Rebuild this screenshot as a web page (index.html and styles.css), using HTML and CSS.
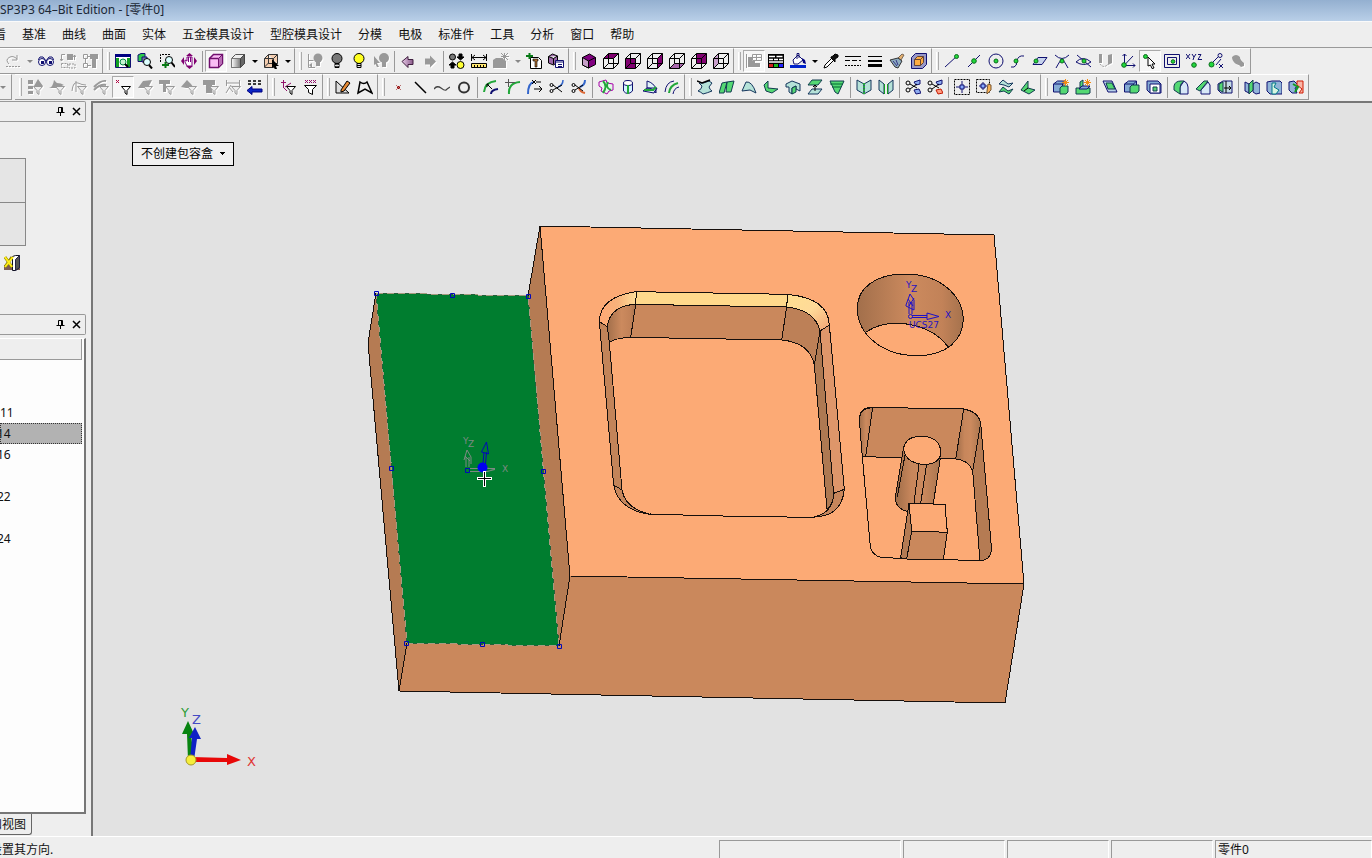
FILE: index.html
```html
<!DOCTYPE html>
<html lang="zh-CN">
<head>
<meta charset="utf-8">
<title>SP3P3 64–Bit Edition - [零件0]</title>
<link rel="stylesheet" href="styles.css">
</head>
<body>
<svg class="sprite" aria-hidden="true">
  <defs>
    <linearGradient id="metal"><stop offset="0" stop-color="#fff"/><stop offset="1" stop-color="#777"/></linearGradient>
    <linearGradient id="mauve"><stop offset="0" stop-color="#e8cbe8"/><stop offset="1" stop-color="#8a5a8a"/></linearGradient>
  </defs>
  <!-- view and edit -->
  <symbol id="redo" viewBox="0 0 16 16"><path class="sg" d="M4 11Q0 7 4 4.500Q8 2 12 6M12 2v5H7"/><path class="sg dash" d="M1 13.500h14"/></symbol>
  <symbol id="glasses" viewBox="0 0 16 16"><g class="sn"><circle cx="4" cy="9" r="3.500" fill="#fff"/><circle cx="12" cy="9" r="3.500" fill="#fff"/><path d="M0 7l2-3h3l3 4 3-4h3l2 3"/><path class="fn" d="M3 8h3v3H3zM11 8h3v3h-3z"/></g></symbol>
  <symbol id="swap" viewBox="0 0 16 16"><path class="sg" d="M5 1.500H1.500v6M0 6l1.500 2L3 6M14.500 2v5M13 4l1.500-2L16 4"/><path class="fg" d="M7 1h6v6H7z"/><path class="sg dash" d="M1.500 10.500h6v4h-6zM9 11h6v4H9z"/></symbol>
  <symbol id="tree" viewBox="0 0 16 16"><path class="sg" d="M1.500 1.500h4v4h-4zM1.500 10.500h4v4h-4zM3.500 6v4M6 3.500h3M6 12.500h3"/><path class="fg" d="M8 1h8v5h-2v9h-4V6H8z"/></symbol>
  <symbol id="fit" viewBox="0 0 16 16"><path fill="#fff" class="sn" d="M.5 1.500h15v13H.5z"/><path fill="#000080" stroke="none" d="M0 1h16v3H0z"/><path fill="#119f22" stroke="none" d="M1 5h3v9H1zM12 5h3v9h-3z"/><circle cx="8" cy="9" r="3" fill="#c5f5d0" stroke="#084"/><path stroke-width="2" d="M10 11l3 3"/></symbol>
  <symbol id="zoomall" viewBox="0 0 16 16"><path class="grn sn" d="M1 2l3-1.500h4v6l-3 2H1z"/><path fill="#77a" class="sn" d="M5 4h5v5H5z"/><circle cx="10" cy="9" r="3.500" fill="#dff" /><path stroke-width="2" d="M12 12l3 3.500"/></symbol>
  <symbol id="zoomwin" viewBox="0 0 16 16"><path class="dash" d="M1.500 9V1.500H11"/><circle cx="10" cy="7" r="3.500" fill="#dff"/><path stroke-width="2" d="M12.500 9.500L16 14"/><path stroke="#087a16" stroke-width="2" d="M3 12h7M6.500 9v6"/></symbol>
  <symbol id="pan" viewBox="0 0 16 16"><path fill="#fff" stroke="#800080" d="M4 7l2 1V4h5v9H6L4 9z"/><path stroke="#800080" d="M7.500 4v5M9.500 4v5"/><path class="fp" d="M3 4v8L0 8zM13 4v8l3-4zM5 3h7L8.500 0zM5 13h7l-3.500 3z"/></symbol>
  <symbol id="shade" viewBox="0 0 16 16"><path fill="#f9bdf4" stroke="#70106e" stroke-width="1.500" d="M1.500 5.500l4-4h9v9l-4 4h-9z"/><path fill="#b86db4" stroke="#70106e" d="M10.500 5.500l4-4v9l-4 4z"/><path stroke="#70106e" stroke-width="1.500" d="M1 5.500h9.500"/></symbol>
  <symbol id="solid" viewBox="0 0 16 16"><path fill="#eee" stroke="#555" d="M1.500 5.500l4-4h9v9l-4 4h-9z"/><path fill="url(#metal)" stroke="#777" d="M1.500 5.500h9v9h-9z"/><path fill="#666" stroke="#444" d="M10.500 5.500l4-4v9l-4 4z"/></symbol>
  <symbol id="boxpick" viewBox="0 0 16 16"><path fill="#f5ceb0" stroke="#333" d="M1.500 5.500l4-4h9v9l-4 4h-9zM1.500 5.500h9v9M10.500 5.500l4-4M5.500 1.500v9h9M1.500 14l4-4"/><path fill="#000" stroke="none" d="M9 6l7 7h-3l1 3-2 .5-1.500-3L9 15z"/></symbol>
  <symbol id="bulbpick" viewBox="0 0 16 16"><path class="sg" d="M1.500 1v13.500H8M1.500 7.500h5"/><circle class="fg" cx="11" cy="5" r="4.500"/><path class="fg" d="M9 9h4v4H9zM2 12l3-2v5z"/></symbol>
  <symbol id="bulboff" viewBox="0 0 16 16"><circle cx="8" cy="5.500" r="5" fill="#777"/><path fill="#555" d="M6 10.500h4v4H6z"/><path stroke="#ddd" d="M6 12.500h4"/></symbol>
  <symbol id="bulbon" viewBox="0 0 16 16"><circle cx="8" cy="5.500" r="5" fill="#ffff20"/><path fill="#ddd" d="M6 10.500h4v4H6z"/><path d="M6 12.500h4"/></symbol>
  <symbol id="bulbarrow" viewBox="0 0 16 16"><path class="fg" d="M1 3l6 7H4l2 4H4l-1.500-3L1 12z"/><circle class="fg" cx="11" cy="5" r="5"/><path class="fg" d="M9 9h4v5H9z"/></symbol>
  <symbol id="left" viewBox="0 0 16 16"><path fill="url(#mauve)" stroke="#402040" d="M2 8.500l6-5v3h5v5H8v3z"/></symbol>
  <symbol id="right" viewBox="0 0 16 16"><path class="fg" d="M14 8.500l-6-6v3H3v6h5v3z"/></symbol>
  <symbol id="lights" viewBox="0 0 16 16"><circle cx="3.500" cy="4" r="3" fill="#777"/><circle cx="11.500" cy="12" r="3.500" fill="#ff3"/><path fill="#000" d="M10 1h3v3h2l-3.500 3L8 4h2zM2 15h3v-3h2L3.500 9 0 12h2z"/></symbol>
  <symbol id="measure" viewBox="0 0 16 16"><path d="M.5 1v7M15.500 1v7M1 4.500h14M4 2L1 4.500 4 7M12 2l3 2.500L12 7"/><path fill="#ffe770" d="M.5 10.500h15v4H.5z"/><path d="M3.500 12v2M6.500 12v2M9.500 12v2M12.500 12v2"/></symbol>
  <symbol id="boom" viewBox="0 0 16 16"><path class="fg" d="M0 7l3-2h6l4 3v7H0z"/><path class="sg" d="M8 0l7 7M15 0L8 7M11.500 0v7M8 3.500h8"/></symbol>
  <symbol id="addlist" viewBox="0 0 16 16"><path fill="#fff" d="M4.500 4.500h8l3 3v8h-11z"/><path fill="#a76b31" stroke-width=".6" d="M7 6h5v2h-1v6H9V8H7z"/><path stroke="#087a16" stroke-width="2" d="M0 3h7M3.500 0v6"/></symbol>
  <symbol id="boxlist" viewBox="0 0 16 16"><path fill="#9d69aa" d="M.5 3.500l4-2.500 5 2v6l-4 3-5-2zM.5 3.500l5 2 4-2.500M5.500 5.500v6"/><path fill="#fff" class="sn" d="M7.500 7.500h8v7h-8zM8 9h7M10 11.500h4M10 13.500h4"/></symbol>
  <!-- standard views -->
  <symbol id="viso" viewBox="0 0 16 16"><path fill="#800080" d="M1.500 4.500l7-3.500 6 3.500v7l-7 3.500-6-3z"/><path fill="#c6a0c8" d="M7.500 8v7l-6-3V4.500z"/><path d="M7.500 8l7-3.500"/></symbol>
  <symbol id="cube" viewBox="0 0 16 16"><path d="M.5 5.500l5-5h10v10l-5 5H.5zM.5 5.500h10v10M10.500 5.500l5-5M5.500.5v10h10M.5 15.500l5-5"/></symbol>
  <symbol id="vtop" viewBox="0 0 16 16"><path class="fp" d="M.5 5.500l5-5h10l-5 5z"/><use href="#cube"/></symbol>
  <symbol id="vfront" viewBox="0 0 16 16"><path class="fp" d="M.5 5.500h10v10H.5z"/><use href="#cube"/></symbol>
  <symbol id="vright" viewBox="0 0 16 16"><path class="fp" d="M10.500 5.500l5-5v10l-5 5z"/><use href="#cube"/></symbol>
  <symbol id="vbottom" viewBox="0 0 16 16"><path fill="#a868ac" stroke="none" d="M.5 15.500l5-5h10l-5 5z"/><use href="#cube"/></symbol>
  <symbol id="vback" viewBox="0 0 16 16"><path class="fp" d="M5.500.5h10v10h-10z"/><use href="#cube"/></symbol>
  <symbol id="vleft" viewBox="0 0 16 16"><path fill="#c9a0cc" stroke="none" d="M.5 5.500l5-5v10l-5 5z"/><use href="#cube"/></symbol>
  <!-- attributes -->
  <symbol id="attr" viewBox="0 0 16 16"><path class="sg" d="M.5 1v14M6.500 1.500h9v6h-9zM7 4.500h8M10.500 2v5"/><path class="fg" d="M2 4h4v4h3v2h5v4H2z"/></symbol>
  <symbol id="layers" viewBox="0 0 16 16"><path fill="#000" stroke="none" d="M0 1h16v14H0z"/><path stroke="#fff" stroke-width="1.500" d="M1 3.500h6M8.500 3.500h6M1 6.500h4M6 6.500h4M11 6.500h4M1 9h14"/><path fill="#d02020" stroke="none" d="M1 11h4v3H1z"/><path fill="#1bb51b" stroke="none" d="M6 11h4v3H6z"/><path fill="#22f" stroke="none" d="M11 11h4v3h-4z"/></symbol>
  <symbol id="bucket" viewBox="0 0 16 16"><path fill="#fff" class="sn" d="M3 7l5-5 5 5-5 4H4z"/><path class="sn" d="M7 6V.5h2V5"/><path fill="#000080" stroke="none" d="M12 5l3 2 1 4-3-1z"/><path fill="#02c" stroke="none" d="M0 12h16v3H0z"/></symbol>
  <symbol id="dropper" viewBox="0 0 16 16"><path fill="#fff" d="M1 15l1-3 7-7 2 2-7 7z"/><path fill="#111" d="M8 4l2-1 2-2 3 1v2l-3 2v3l-4-4z"/></symbol>
  <symbol id="ltype" viewBox="0 0 16 16"><path d="M0 3.500h16"/><path stroke-dasharray="5 2" d="M0 7.500h16"/><path stroke-dasharray="2 1" d="M0 12.500h16"/></symbol>
  <symbol id="lweight" viewBox="0 0 16 16"><path d="M1 3.500h14"/><path stroke-width="2" d="M1 8h14"/><path stroke-width="3" d="M1 12.500h14"/></symbol>
  <symbol id="broom" viewBox="0 0 16 16"><path fill="#e4b070" stroke="#765" d="M9 5l4-4 2 1-3 5z"/><path fill="#8dacbf" stroke="#333" d="M1 7l8-2 4 3-4 7-3-1z"/><path stroke="#338" d="M4 8l4 5M7 7l2 5"/></symbol>
  <symbol id="orange" viewBox="0 0 16 16"><path fill="#9898c8" class="sn" d="M.5 4.500l4-4h11v11l-4 4H.5z"/><path fill="#ffad42" stroke="#643" d="M3.500 6.500l3-3h6v6l-3 3h-6zM3.500 6.500h6v6M9.500 6.500l3-3"/></symbol>
  <!-- snaps -->
  <symbol id="send" viewBox="0 0 16 16"><path class="sn" d="M1 14L13 3"/><circle class="pt" cx="12.500" cy="3.500" r="2"/></symbol>
  <symbol id="smid" viewBox="0 0 16 16"><path class="sn" d="M2 14L14 2"/><circle class="pt" cx="8" cy="8" r="2.300"/></symbol>
  <symbol id="scen" viewBox="0 0 16 16"><circle class="sn" cx="8" cy="8" r="7"/><circle class="pt" cx="8" cy="8" r="2"/></symbol>
  <symbol id="scurve" viewBox="0 0 16 16"><path class="sn" d="M1 14h3Q7 13 7 8Q8 2 14 3"/><circle class="pt" cx="6" cy="8" r="2"/></symbol>
  <symbol id="sface" viewBox="0 0 16 16"><path class="sn" fill="#c6d2ec" d="M1 11.500l5-7h9l-5 7z"/><circle class="pt" cx="4" cy="8" r="2"/></symbol>
  <symbol id="scross" viewBox="0 0 16 16"><path class="sn" d="M1 2q7 7 14 0M2 15Q7 6 8 6t6 9"/><circle class="pt" cx="8" cy="8" r="2"/></symbol>
  <symbol id="sint" viewBox="0 0 16 16"><path class="sn" d="M1 2l14 12M0 9Q7 2 15 9Q8 14 0 9"/><circle class="pt" cx="8" cy="8" r="2"/></symbol>
  <symbol id="sgray" viewBox="0 0 16 16"><path class="sg dash" d="M2 2v9q4 5 8 0"/><path class="fg" d="M10 2l4-1v9l-4 2zM1 1h3v9H1z"/></symbol>
  <symbol id="sucs" viewBox="0 0 16 16"><path class="sn" d="M4.500 1v11.500H15M4.500 12L13 3M2.500 3l2-2 2 2M13 10.500l2 2-2 2"/><circle class="pt" cx="4" cy="12" r="2.300"/></symbol>
  <symbol id="spick" viewBox="0 0 16 16"><circle class="pt" cx="3.500" cy="3.500" r="2"/><path fill="#fff" d="M6 4l7 7h-3l2 4-2 .5-1.500-3.500L6 13z"/></symbol>
  <symbol id="srect" viewBox="0 0 16 16"><path class="sn" d="M.5 1.500h15v13H.5zM3.500 4.500h9v7h-9z"/><circle class="pt" cx="9" cy="8.500" r="1.800"/></symbol>
  <symbol id="sxyz" viewBox="0 0 16 16"><path class="sn" d="M0 1l4 5M4 1L0 6M6 1l2 3 2-3M8 4l-1 3M12 1.500h3l-3 5h4"/><circle class="pt" cx="8" cy="12" r="2.300"/></symbol>
  <symbol id="sdist" viewBox="0 0 16 16"><path class="sn" d="M5 9l5-5M8 12l5-6M11 11l4 4M15 11l-4 4"/><circle class="sn" cx="12" cy="2.500" r="2"/><circle class="pt" cx="3.500" cy="11.500" r="2.500"/></symbol>
  <symbol id="sblob" viewBox="0 0 16 16"><path class="fg" d="M2 4q4-4 8 0 0 3 4 6v3l-3 1q-1-2-5-3-4-3-4-7z"/></symbol>
  <!-- selection filters -->
  <symbol id="funnel" viewBox="0 0 16 16"><path fill="#fff" d="M6.500 7.500h9l-3.500 4v4l-2-1.500v-2.500z"/></symbol>
  <symbol id="gfun" viewBox="0 0 16 16"><path fill="#eee" class="sg" d="M6.500 7.500h9l-3.500 4v4l-2-1.500v-2.500z"/></symbol>
  <symbol id="f1" viewBox="0 0 16 16"><path class="fg" d="M1 1h5v4H1zM1 7h5v3H1zM1 12h5v3H1zM7 7l4-7 5 7z"/><use href="#gfun"/></symbol>
  <symbol id="f2" viewBox="0 0 16 16"><path class="fg" d="M0 9q4-1 5-8l3 3q4 0 7 2L8 9z"/><use href="#gfun"/></symbol>
  <symbol id="f3" viewBox="0 0 16 16"><path class="sg" d="M1 12Q2 2 7 4q4 2 8 2M5 2v11"/><use href="#gfun"/></symbol>
  <symbol id="f4" viewBox="0 0 16 16"><path class="sg" stroke-width="2" d="M1 8q7-7 12-6M1 11q6-6 12-5"/><use href="#gfun"/></symbol>
  <symbol id="fx" viewBox="0 0 16 16"><path stroke="#b00040" d="M1 1l3 3M4 1L1 4"/><use href="#funnel"/></symbol>
  <symbol id="f5" viewBox="0 0 16 16"><path class="fg" d="M1 9l5-7 9-1-4 8z"/><use href="#gfun"/></symbol>
  <symbol id="f6" viewBox="0 0 16 16"><path class="fg" d="M0 1h11v4H7v8H4V5H0z"/><use href="#gfun"/></symbol>
  <symbol id="f7" viewBox="0 0 16 16"><path class="fg" d="M0 8l6-7 4 4 3 4H5z"/><use href="#gfun"/></symbol>
  <symbol id="f8" viewBox="0 0 16 16"><path class="fg" d="M0 1h12v5H9v8H3V6H0z"/><use href="#gfun"/></symbol>
  <symbol id="f9" viewBox="0 0 16 16"><path class="sg" d="M1.500 1v6M14.500 1v6M2 4h12M1 14L6 6M4 8l4 5"/><use href="#gfun"/></symbol>
  <symbol id="bluearrow" viewBox="0 0 16 16"><path stroke-width="1.500" stroke-dasharray="3 2" d="M1 2h15M1 5h15"/><path fill="#0b24c4" stroke="#000080" d="M0 11.500l5-4v2.500h10v3H5v2.500z"/></symbol>
  <symbol id="chainfun" viewBox="0 0 16 16"><path stroke="#92106a" d="M3.500 1v7M1 3.500h5M5 8l6-4M3 8l4 4"/><use href="#funnel"/></symbol>
  <symbol id="multifun" viewBox="0 0 16 16"><path stroke="#92106a" d="M3 1l3 3M6 1L3 4M7 1l3 3M10 1L7 4M11 1l3 3M14 1l-3 3"/><path fill="#fff" d="M2.500 6.500h12l-4 4v5l-4-2v-3z"/></symbol>
  <!-- curves -->
  <symbol id="sketch" viewBox="0 0 16 16"><path fill="#ddd" d="M1 2v12h13z"/><path fill="#e68a35" d="M6 11L12 2l3 2-6 8-3 1z"/></symbol>
  <symbol id="outline" viewBox="0 0 16 16"><path stroke-width="1.500" d="M1 14l2-11q4 3 7 0l5 11-7-4z"/></symbol>
  <symbol id="point" viewBox="0 0 16 16"><path fill="#900" stroke="none" d="M7 7h3v3H7z"/><path stroke="#b87070" d="M6 6l5 5M11 6l-5 5"/></symbol>
  <symbol id="line" viewBox="0 0 16 16"><path stroke-width="1.500" d="M3 3l11 11"/></symbol>
  <symbol id="wave" viewBox="0 0 16 16"><path stroke="#444" stroke-width="1.300" d="M0 10q3-4 7-1t5 2 4-3"/></symbol>
  <symbol id="circle" viewBox="0 0 16 16"><circle cx="8" cy="8.500" r="5" stroke-width="2" stroke="#333"/></symbol>
  <symbol id="c1" viewBox="0 0 16 16"><path class="sgr" d="M1 13Q2 3 13 2"/><path class="sn" stroke-width="2" d="M8 15q0-4 7-5"/><path d="M4 5l5 5M6 5H4v3"/></symbol>
  <symbol id="c2" viewBox="0 0 16 16"><path class="sgr" d="M4 15Q3 4 15 3"/><path stroke="#555" d="M0 3.500h10M3.500 0v8"/></symbol>
  <symbol id="c3" viewBox="0 0 16 16"><path stroke="#36c" stroke-width="2" d="M1 15Q1 4 7 3"/><path d="M5 1l4 4M9 1L5 5M7 10h8M12 7l3 3-3 3M9 3h5"/></symbol>
  <symbol id="c4" viewBox="0 0 16 16"><path stroke="#36c" stroke-width="1.500" d="M9 8q5-2 5-7"/><circle cx="2.500" cy="6" r="1.500"/><circle cx="2.500" cy="12" r="1.500"/><path d="M4 6l9 7M4 11l9-5"/></symbol>
  <symbol id="c5" viewBox="0 0 16 16"><path stroke="#36c" stroke-width="2" d="M9 8q5-2 5-7"/><path stroke="#d63" stroke-width="2" d="M8 9q1 4 6 5"/><circle cx="2.500" cy="6" r="1.500"/><circle cx="2.500" cy="12" r="1.500"/><path d="M4 6l8 6M4 11l8-5"/></symbol>
  <symbol id="c6" viewBox="0 0 16 16"><path stroke="#a0a" fill="#e3f8e8" d="M1 3l7-2 1 3 6 1 0 6-4 1-2 3-6-3 1-3-3-2z"/><path class="sgr" d="M5 2q5 5 0 12M10 3q-3 6 3 8"/></symbol>
  <symbol id="c7" viewBox="0 0 16 16"><path class="sn" fill="#d4f3ff" d="M3.500 4v8q4 5 9 0V4"/><ellipse cx="8" cy="4" rx="4.500" ry="2.500" fill="#fff" class="sn"/><path class="sgr" d="M8 6v9"/></symbol>
  <symbol id="c8" viewBox="0 0 16 16"><path class="sn" fill="#e0f3f8" d="M1 12l4-3h10l-3 5zM5 2q7 2 9 8v4q-3-5-9-5z"/><path class="sgr" d="M2 11h9l3-3"/></symbol>
  <symbol id="c9" viewBox="0 0 16 16"><path class="sn" d="M1 13Q2 3 10 2"/><path class="sgr" d="M5 14q1-8 9-10"/><path class="sn" d="M9 15q1-6 6-7"/></symbol>
  <!-- surfaces -->
  <symbol id="s1" viewBox="0 0 16 16"><path class="sf pale" d="M2 4q4 1 10-2l3 2-3 4q1 3 3 4-5 2-9 3-2-2-5-3 4-2 4-5z"/><path stroke-width="1.500" d="M0 2l5 2 8-3"/></symbol>
  <symbol id="s2" viewBox="0 0 16 16"><path class="sf" d="M3 4l5-1-3 11H0zM8 3l7-1-3 11H7z"/></symbol>
  <symbol id="s3" viewBox="0 0 16 16"><path class="sf pale" d="M1 12l4-9q6-1 10 11l-6-3z"/></symbol>
  <symbol id="s4" viewBox="0 0 16 16"><path class="sf" d="M1 6l4-4v7l10 1-6 4-6-2z"/></symbol>
  <symbol id="s5" viewBox="0 0 16 16"><path class="sf pale" d="M1 5l6-3 8 3v7l-4-2v-3L7 9v6l-3-2V8H1z"/><path class="sf" d="M7 9l4-2v6l-4 2z"/></symbol>
  <symbol id="s6" viewBox="0 0 16 16"><path class="sf" d="M5 1h10l-4 5H1z"/><path class="sf pale" d="M5 10h10l-4 5H1z"/><path d="M8 6v6M6 8l2-2 2 2"/></symbol>
  <symbol id="s7" viewBox="0 0 16 16"><path class="sf" d="M1 2h14l-6 13-3-2z"/><path stroke="#063" d="M1 5h13M3 8h9"/></symbol>
  <symbol id="m1" viewBox="0 0 16 16"><path class="sf pale" d="M1 1l7 4v10L1 11zM15 1L8 5v10l7-4z"/><path class="sgr dash" d="M8 4v11"/></symbol>
  <symbol id="m2" viewBox="0 0 16 16"><path class="sf pale" d="M1 1l5 4v10l-5-4zM15 1l-5 4v10l5-4z"/><path stroke="#139d22" d="M6.500 5v10M9.500 5v10"/></symbol>
  <symbol id="t1" viewBox="0 0 16 16"><path fill="#8eadf0" class="sn" d="M9 3l6-2v4l-4 1zM9 11l5-1 2 4-5 1z"/><circle cx="3" cy="4" r="2"/><circle cx="3" cy="11" r="2"/><path d="M5 5l7 4M5 10l7-5"/></symbol>
  <symbol id="t2" viewBox="0 0 16 16"><path fill="#8eadf0" class="sn" d="M9 3l6-2v4l-4 1z"/><path fill="#ff9b80" stroke="#c31800" d="M9 11l5-1 2 4-5 1z"/><circle cx="3" cy="4" r="2"/><circle cx="3" cy="11" r="2"/><path d="M5 5l7 4M5 10l7-5"/></symbol>
  <symbol id="e1" viewBox="0 0 16 16"><path class="dash" d="M.5.500h15v15H.5z"/><path class="sn" d="M8 2v12M2 8h12"/><path fill="#8af" class="sn" d="M6 6h4v4H6z"/></symbol>
  <symbol id="e2" viewBox="0 0 16 16"><path class="dash" d="M.5.500h13v13H.5z"/><path class="sn" d="M7 3v8M3 7h8"/><path fill="#8af" class="sn" d="M5 5h4v4H5z"/><path fill="#f9b255" stroke="#753" d="M11 12l1-7 3 1v5l-4 4z"/></symbol>
  <symbol id="e3" viewBox="0 0 16 16"><path class="sf pale" d="M1 5l4-4 5 4 5-1-4 4-5-2z"/><path class="sf" d="M1 13l4-5 5 4 5-2-4 5-5-3z"/></symbol>
  <symbol id="e4" viewBox="0 0 16 16"><path class="sf" d="M1 11L8 2v7l7 2-6 4z"/><path d="M8 9l-4 3"/></symbol>
  <!-- solids -->
  <symbol id="block" viewBox="0 0 16 16"><path fill="#83a9d4" class="sn" d="M.5 5l4-3h8v8l-3 3h-9zM.5 5h9v8M9.500 5l3-3"/></symbol>
  <symbol id="star" viewBox="0 0 16 16"><path stroke="#f38b13" d="M12.500 0v7M9 3.500h7M10 1l5 5M15 1l-5 5"/></symbol>
  <symbol id="b1" viewBox="0 0 16 16"><use href="#block"/><path class="sf" d="M7 9l2-2h6v6l-2 2H7z"/><use href="#star"/></symbol>
  <symbol id="b2" viewBox="0 0 16 16"><path class="sf" d="M1 9h4V3l3-2v8h7v5l-2 1H1z"/><path fill="#83a9d4" class="sn" d="M4 10l3-3h8l-3 3z"/><use href="#star"/></symbol>
  <symbol id="b3" viewBox="0 0 16 16"><path fill="#b8d1e9" class="sn" d="M1 2h9l5 11H6z"/><path class="sf" d="M4 4h6l3 6H6z"/></symbol>
  <symbol id="b4" viewBox="0 0 16 16"><use href="#block"/><path class="sf" d="M6 8l2-2h7v6l-2 2H6z"/></symbol>
  <symbol id="b5" viewBox="0 0 16 16"><path fill="#83a9d4" class="sn" d="M1 2h11l3 3v9H4l-3-3z"/><path fill="#fff" class="sn" d="M4 5h10v9H4z"/><path class="sf" d="M7 8h4v4H7z"/></symbol>
  <symbol id="r1" viewBox="0 0 16 16"><path fill="#d7e8f7" class="sn" d="M7 15V8l4-6q4 2 4 6v7z"/><path class="sf" d="M1 7q1-5 7-5h3q-4 2-4 7v6l-6-4z"/></symbol>
  <symbol id="r2" viewBox="0 0 16 16"><path fill="#d7e8f7" class="sn" d="M6 15v-4l7-8 2 3v9z"/><path class="sf" d="M1 10l8-8h4L5 12z"/></symbol>
  <symbol id="r3" viewBox="0 0 16 16"><path fill="#c5dbe4" class="sn" d="M1 5l5-3h9v12H4l-3-3z"/><path class="sf" d="M2 5l4-2v10l-4-2z"/><path d="M7 9h7M12 7l2 2-2 2M9 2v12"/></symbol>
  <symbol id="x1" viewBox="0 0 16 16"><path fill="#91b4d8" class="sn" d="M1 3l4 2v9l-4-2zM9 5l3-2 4 2v9l-4 1-3-2z"/><path class="sf" d="M5 5l4-4v10l-4 4z"/></symbol>
  <symbol id="x2" viewBox="0 0 16 16"><path fill="#91b4d8" class="sn" d="M1 3l5-1h8l2 2v11H4l-3-3z"/><path fill="#d9f6e1" stroke="#078" d="M6 4h4l-2 4 5 3-3 4H6z"/></symbol>
  <symbol id="x3" viewBox="0 0 16 16"><path fill="#91b4d8" class="sn" d="M1 3l5-1 5 5-4 2 2 5H4l-3-3z"/><path fill="#f9b6a6" stroke="#d01800" d="M9 2h6v12h-4l3-4-5-4z"/><path stroke="#139d22" stroke-width="2" d="M5 5l5 3-3 5"/></symbol>
</svg>

<div class="app">
  <header class="titlebar">SP3P3 64–Bit Edition - [零件0]</header>
  <nav class="menubar">
    <button class="cut">看</button><button>基准</button><button>曲线</button><button>曲面</button><button>实体</button><button>五金模具设计</button><button>型腔模具设计</button><button>分模</button><button>电极</button><button>标准件</button><button>工具</button><button>分析</button><button>窗口</button><button>帮助</button>
  </nav>

  <div class="toolbar">
    <div class="group first">
      <button class="off" aria-label="重做"><svg><use href="#redo"/></svg></button><button class="drop off" aria-label="重做列表"></button>
      <button aria-label="查找"><svg><use href="#glasses"/></svg></button><button class="off" aria-label="替换"><svg><use href="#swap"/></svg></button><button class="off" aria-label="结构"><svg><use href="#tree"/></svg></button>
    </div>
    <div class="group">
      <button aria-label="全屏"><svg><use href="#fit"/></svg></button><button aria-label="缩放全部"><svg><use href="#zoomall"/></svg></button><button aria-label="窗口缩放"><svg><use href="#zoomwin"/></svg></button><button aria-label="平移"><svg><use href="#pan"/></svg></button>
      <i class="sep"></i>
      <button class="on" aria-label="线框"><svg><use href="#shade"/></svg></button><button aria-label="着色"><svg><use href="#solid"/></svg></button><button class="drop" aria-label="着色列表"></button><button aria-label="拾取"><svg><use href="#boxpick"/></svg></button><button class="drop" aria-label="拾取列表"></button>
    </div>
    <div class="group">
      <button class="off" aria-label="隐藏选项"><svg><use href="#bulbpick"/></svg></button><button aria-label="隐藏"><svg><use href="#bulboff"/></svg></button><button aria-label="显示"><svg><use href="#bulbon"/></svg></button><button class="off" aria-label="切换显示"><svg><use href="#bulbarrow"/></svg></button>
      <i class="sep"></i>
      <button aria-label="后退"><svg><use href="#left"/></svg></button><button class="off" aria-label="前进"><svg><use href="#right"/></svg></button>
      <i class="sep"></i>
      <button aria-label="反转"><svg><use href="#lights"/></svg></button><button aria-label="测量"><svg><use href="#measure"/></svg></button><button class="off" aria-label="炸开"><svg><use href="#boom"/></svg></button><button class="drop off" aria-label="炸开列表"></button><button aria-label="添加"><svg><use href="#addlist"/></svg></button><button aria-label="属性表"><svg><use href="#boxlist"/></svg></button>
    </div>
    <div class="group">
      <button aria-label="轴测"><svg><use href="#viso"/></svg></button><button aria-label="顶视"><svg><use href="#vtop"/></svg></button><button aria-label="前视"><svg><use href="#vfront"/></svg></button><button aria-label="右视"><svg><use href="#vright"/></svg></button><button aria-label="底视"><svg><use href="#vbottom"/></svg></button><button aria-label="后视"><svg><use href="#vback"/></svg></button><button aria-label="左视"><svg><use href="#vleft"/></svg></button>
    </div>
    <div class="group">
      <button class="off on" aria-label="属性"><svg><use href="#attr"/></svg></button><button aria-label="图层"><svg><use href="#layers"/></svg></button><button aria-label="颜色"><svg><use href="#bucket"/></svg></button><button class="drop" aria-label="颜色列表"></button><button aria-label="吸管"><svg><use href="#dropper"/></svg></button><button aria-label="线型"><svg><use href="#ltype"/></svg></button><button aria-label="线宽"><svg><use href="#lweight"/></svg></button><button aria-label="格式刷"><svg><use href="#broom"/></svg></button><button aria-label="材质"><svg><use href="#orange"/></svg></button>
    </div>
    <div class="group">
      <button aria-label="端点"><svg><use href="#send"/></svg></button><button aria-label="中点"><svg><use href="#smid"/></svg></button><button aria-label="圆心"><svg><use href="#scen"/></svg></button><button aria-label="曲线上点"><svg><use href="#scurve"/></svg></button><button aria-label="面上点"><svg><use href="#sface"/></svg></button><button aria-label="相切"><svg><use href="#scross"/></svg></button><button aria-label="交点"><svg><use href="#sint"/></svg></button><button class="off" aria-label="投影"><svg><use href="#sgray"/></svg></button><button aria-label="坐标系"><svg><use href="#sucs"/></svg></button><button class="on" aria-label="自由拾取"><svg><use href="#spick"/></svg></button><button aria-label="屏幕点"><svg><use href="#srect"/></svg></button><button aria-label="坐标点"><svg><use href="#sxyz"/></svg></button><button aria-label="增量点"><svg><use href="#sdist"/></svg></button><button class="off" aria-label="区域"><svg><use href="#sblob"/></svg></button>
    </div>
  </div>

  <div class="toolbar">
    <div class="group stub"><button class="drop off" aria-label="更多"></button></div>
    <div class="group">
      <button class="off" aria-label="过滤全部"><svg><use href="#f1"/></svg></button><button class="off" aria-label="过滤体"><svg><use href="#f2"/></svg></button><button class="off" aria-label="过滤线"><svg><use href="#f3"/></svg></button><button class="off" aria-label="过滤环"><svg><use href="#f4"/></svg></button><button class="on" aria-label="过滤点"><svg><use href="#fx"/></svg></button><button class="off" aria-label="过滤面"><svg><use href="#f5"/></svg></button><button class="off" aria-label="过滤零件"><svg><use href="#f6"/></svg></button><button class="off" aria-label="过滤特征"><svg><use href="#f7"/></svg></button><button class="off" aria-label="过滤组件"><svg><use href="#f8"/></svg></button><button class="off" aria-label="过滤尺寸"><svg><use href="#f9"/></svg></button><button aria-label="重置"><svg><use href="#bluearrow"/></svg></button>
    </div>
    <div class="group"><button aria-label="链选"><svg><use href="#chainfun"/></svg></button><button aria-label="多选"><svg><use href="#multifun"/></svg></button></div>
    <div class="group"><button aria-label="草图"><svg><use href="#sketch"/></svg></button><button aria-label="轮廓"><svg><use href="#outline"/></svg></button></div>
    <div class="group">
      <button aria-label="点"><svg><use href="#point"/></svg></button><button aria-label="直线"><svg><use href="#line"/></svg></button><button aria-label="样条"><svg><use href="#wave"/></svg></button><button aria-label="圆"><svg><use href="#circle"/></svg></button>
      <i class="sep"></i>
      <button aria-label="偏移"><svg><use href="#c1"/></svg></button><button aria-label="倒角"><svg><use href="#c2"/></svg></button><button aria-label="延伸"><svg><use href="#c3"/></svg></button><button aria-label="修剪"><svg><use href="#c4"/></svg></button><button aria-label="分割"><svg><use href="#c5"/></svg></button>
      <i class="sep"></i>
      <button aria-label="组合曲线"><svg><use href="#c6"/></svg></button><button aria-label="圆柱曲线"><svg><use href="#c7"/></svg></button><button aria-label="截面线"><svg><use href="#c8"/></svg></button><button aria-label="平行线"><svg><use href="#c9"/></svg></button>
    </div>
    <div class="group">
      <button aria-label="网格面"><svg><use href="#s1"/></svg></button><button aria-label="放样面"><svg><use href="#s2"/></svg></button><button aria-label="边界面"><svg><use href="#s3"/></svg></button><button aria-label="扫掠面"><svg><use href="#s4"/></svg></button><button aria-label="偏移面"><svg><use href="#s5"/></svg></button><button aria-label="中间面"><svg><use href="#s6"/></svg></button><button aria-label="拔模面"><svg><use href="#s7"/></svg></button>
      <i class="sep"></i>
      <button aria-label="缝合"><svg><use href="#m1"/></svg></button><button aria-label="拆分"><svg><use href="#m2"/></svg></button>
      <i class="sep"></i>
      <button aria-label="剪切面"><svg><use href="#t1"/></svg></button><button aria-label="分割面"><svg><use href="#t2"/></svg></button>
      <i class="sep"></i>
      <button aria-label="延伸面"><svg><use href="#e1"/></svg></button><button aria-label="编辑面"><svg><use href="#e2"/></svg></button><button aria-label="替换面"><svg><use href="#e3"/></svg></button><button aria-label="折弯面"><svg><use href="#e4"/></svg></button>
    </div>
    <div class="group">
      <button aria-label="新建体"><svg><use href="#b1"/></svg></button><button aria-label="新建旋转"><svg><use href="#b2"/></svg></button>
      <i class="sep"></i>
      <button aria-label="拉伸"><svg><use href="#b3"/></svg></button><button aria-label="加料"><svg><use href="#b4"/></svg></button><button aria-label="开孔"><svg><use href="#b5"/></svg></button>
      <i class="sep"></i>
      <button aria-label="圆角"><svg><use href="#r1"/></svg></button><button aria-label="斜角"><svg><use href="#r2"/></svg></button><button aria-label="拔模"><svg><use href="#r3"/></svg></button>
      <i class="sep"></i>
      <button aria-label="切割"><svg><use href="#x1"/></svg></button><button aria-label="合并"><svg><use href="#x2"/></svg></button><button aria-label="分离"><svg><use href="#x3"/></svg></button>
    </div>
  </div>

  <main class="workspace">
    <aside class="sidebar">
      <div class="pane-head"><button aria-label="固定"><svg viewBox="0 0 9 9"><path d="M2.500 5V.5h4V5M.5 5.500h8M4.500 6v3M5.500 1v4"/></svg></button><button aria-label="关闭"><svg viewBox="0 0 9 9"><path stroke-width="1.500" d="M1 1l7 7M8 1L1 8"/></svg></button></div>
      <div class="options">
        <div class="cells"><div></div><div></div></div>
        <button class="exit" aria-label="退出"><svg viewBox="0 0 16 16"><path fill="#7c5b52" stroke="none" d="M0 10h16v5H0z"/><path fill="#fff" stroke="#112" d="M8.500 1.500l3-1h4v12l-4 3h-3z"/><path fill="#555" stroke="#224" d="M11.500 4.500l4-4v12l-4 3z"/><path stroke="#8a7c00" stroke-width="3" d="M1 2l7 10M8 2L1 12"/><path stroke="#ffee18" stroke-width="2" d="M1 2l7 10M9 2L1 12"/></svg></button>
      </div>
      <div class="pane-head"><button aria-label="固定"><svg viewBox="0 0 9 9"><path d="M2.500 5V.5h4V5M.5 5.500h8M4.500 6v3M5.500 1v4"/></svg></button><button aria-label="关闭"><svg viewBox="0 0 9 9"><path stroke-width="1.500" d="M1 1l7 7M8 1L1 8"/></svg></button></div>
      <div class="tree">
        <div class="tree-head"></div>
        <ul>
          <li></li><li></li><li class="wide">11</li><li class="selected">14</li><li>16</li><li></li><li>22</li><li></li><li>24</li>
        </ul>
      </div>
      <div class="tabs"><button>和视图</button></div>
    </aside>

    <section class="viewport">
      <svg class="scene" viewBox="93 103 1279 733" preserveAspectRatio="xMinYMin meet" aria-label="零件0">
        <defs>
          <linearGradient id="bore"><stop offset="0" stop-color="#a26f4b"/><stop offset=".5" stop-color="#cc8a5e"/><stop offset=".8" stop-color="#c28258"/><stop offset="1" stop-color="#a5724d"/></linearGradient>
          <linearGradient id="corner"><stop offset="0" stop-color="#ffa874"/><stop offset=".5" stop-color="#f8b27b"/><stop offset="1" stop-color="#ffdf9a"/></linearGradient>
          <linearGradient id="corner2" x1="0" y1="0" x2="1" y2="1"><stop offset="0" stop-color="#ffdf91"/><stop offset=".5" stop-color="#ffda98"/><stop offset="1" stop-color="#f4a273"/></linearGradient>
          <linearGradient id="post"><stop offset="0" stop-color="#9e6c48"/><stop offset=".35" stop-color="#c7865b"/><stop offset=".6" stop-color="#cc8a5e"/><stop offset="1" stop-color="#aa764f"/></linearGradient>
          <clipPath id="rim"><path d="M180 42C90 42 37 85 37 145C37 225 115 287 215 287C305 287 355 240 355 175C350 100 280 42 180 42z"/></clipPath>
        </defs>
        <!-- blocks -->
        <g class="edges">
          <path class="left" d="M376 293L368 343 399 691 407 643z"/>
          <path class="front" d="M407 643L559 646 570 576 1024 584 1005 703 399 691z"/>
          <path class="left" d="M540 226L570 576 559 646 528 296z"/>
          <path class="top" d="M540 226L994 235 1024 584 570 576z"/>
          <path class="picked" d="M376 293L528 296 559 646 407 643z"/>
          <path class="marching" d="M376 293L528 296 559 646 407 643z"/>
        </g>
        <!-- large pocket, drawn at three units to the pixel -->
        <g class="edges" transform="translate(585 270) scale(.33333)">
          <path class="front" d="M67 170Q75 107 148 103L605 111Q690 120 705 183L688 285Q675 218 590 210L137 202Q85 205 73 218z"/>
          <path fill="url(#bore)" d="M67 170Q75 107 152 103L137 202Q85 205 73 218z"/>
          <path fill="#bd8057" d="M605 111Q690 120 705 183L688 285Q675 218 590 210z"/>
          <path fill="url(#corner)" d="M43 155Q45 80 154 65L152 103Q75 107 67 170z"/>
          <path fill="#ffd98c" d="M154 65L608 73 606 111 152 103z"/>
          <path fill="url(#corner2)" d="M608 73Q730 85 733 165L705 183Q690 120 605 111z"/>
          <path fill="#c38459" d="M43 155L67 170 73 218 111 660 86 645z"/>
          <path fill="#ae7952" d="M705 183L688 285 726 718Q746 700 746 670z"/>
          <path fill="#de966a" d="M705 183L733 165 778 658 746 670z"/>
          <path fill="#c7865b" d="M86 645L111 660Q120 715 195 733Q100 720 86 645z"/>
          <path fill="#c7865b" d="M746 670L778 658Q770 740 688 740Q744 729 746 670z"/>
          <path fill="none" d="M195 732L360 737 520 740 690 742"/>
        </g>
        <!-- bore and small pocket -->
        <g class="edges" transform="translate(845 260) scale(.33333)">
          <path fill="url(#bore)" d="M180 42C90 42 37 85 37 145C37 225 115 287 215 287C305 287 355 240 355 175C350 100 280 42 180 42z"/>
          <g clip-path="url(#rim)"><path class="top" d="M62 217C130 170 250 185 307 258L330 330H20z"/></g>
          <path fill="none" d="M180 42C90 42 37 85 37 145C37 225 115 287 215 287C305 287 355 240 355 175C350 100 280 42 180 42z"/>
          <path class="top" d="M43 480Q43 445 75 442L358 447Q400 455 407 490L440 870Q435 902 405 902L110 893Q80 885 76 860L52 590z"/>
          <path class="front" d="M43 480Q43 445 75 442L358 447Q400 455 407 490L383 632Q370 600 332 597L52 590z"/>
          <path fill="url(#bore)" d="M43 480Q43 445 83 443L62 590H52z"/>
          <path fill="url(#post)" d="M356 448Q400 455 407 490L383 632Q370 600 332 597z"/>
          <path class="left" d="M407 490L440 870Q435 902 405 902L383 632z"/>
          <path fill="url(#post)" d="M176 560L151 710Q150 745 188 755L205 730H265L286 595z"/>
          <path fill="none" d="M181 580L157 710M222 612L207 730M245 612L227 730"/>
          <path class="top" d="M176 568C178 538 200 528 235 529C270 532 288 550 287 580C285 610 250 618 215 610Q180 600 176 568z"/>
          <path class="left" d="M192 730L200 813 185 897 167 893z"/>
          <path class="front" d="M200 813L307 817 295 900 185 897z"/>
          <path class="top" d="M192 730L300 733 307 817 200 813z"/>
        </g>
        <!-- coordinate system in the bore -->
        <g class="ucs">
          <circle cx="910.500" cy="316.500" r="2"/>
          <path d="M912 315.500h15M912 317.500h15M927 313l12 3.500-12 3zM909 314v-12M912 314v-12M906 305l4-11 4 6v10l-8-4zM908 299l5 7M909 306l5-8"/>
          <text x="906" y="288">Y</text><text x="911" y="292">Z</text><text x="945" y="318">X</text><text x="909" y="328">UCS27</text>
        </g>
        <!-- coordinate system on the picked face -->
        <g class="ucs faint">
          <path d="M470 468.500h25M470 471.500h17M487 468l8 1.500-8 2M466 467v-10M469 467v-10M464 460l3-10 4 7v7M465 456l5 5"/>
          <text x="463" y="444">Y</text><text x="468" y="447">Z</text><text x="502" y="472">X</text>
        </g>
        <g class="handles">
          <path d="M374.500 291.500h4v4h-4zM450.500 293.500h4v4h-4zM526.500 294.500h4v4h-4zM389.500 466.500h4v4h-4zM541.500 469.500h4v4h-4zM404.500 641.500h4v4h-4zM480.500 642.500h4v4h-4zM557.500 644.500h4v4h-4zM465.500 468.500h4v4h-4z"/>
          <path d="M483 464l1-12M485.500 464l1-12M481.500 452l5-10 2 12z"/>
          <circle cx="482.500" cy="467.500" r="5"/>
        </g>
        <path class="cursor-back" d="M477 478.500h15M484.500 471v16"/>
        <path class="cursor" d="M478 478.500h13M484.500 472v14"/>
        <!-- world axes -->
        <g class="triad">
          <path fill="#078410" d="M188 760l-1-26h-5l6-13 6 13h-3l3 26z"/>
          <path fill="#1021c6" d="M190 760l2-22h-3l6-11 6 12h-4l-3 21z"/>
          <path fill="#e80808" d="M192 757l35 1v-4l14 6-14 5v-3h-35z"/>
          <circle cx="191" cy="760" r="5"/>
          <text x="181" y="717" fill="#2b9b35">Y</text><text x="192" y="724" fill="#454ac4">Z</text><text x="247" y="766" fill="#e03434">X</text>
        </g>
      </svg>
      <select class="bounding" aria-label="包容盒"><option>不创建包容盒</option></select>
    </section>
  </main>

  <footer class="statusbar">
    <div class="message">设置其方向.</div>
    <div class="cell w1"></div><div class="cell"></div><div class="cell"></div><div class="cell"></div><div class="cell w2">零件0</div>
  </footer>
</div>
</body>
</html>
```
FILE: styles.css
```css
*, *::before, *::after { box-sizing: border-box; }

body {
  margin: 0;
  background: #eee;
  color: #111;
  font: 12px/16px "Noto Sans", "Noto Sans CJK SC", sans-serif;
}

button {
  margin: 0;
  padding: 0;
  border: 0;
  background: none;
  color: inherit;
  font: inherit;
}

svg { fill: none; stroke: #000; }
.sprite { position: absolute; width: 0; height: 0; }

/* icon paints */
.sn { stroke: #101070; }
.sg { stroke: #999; }
.sgr { stroke: #22a83a; stroke-width: 2; }
.fg { fill: #999; stroke: none; }
.fp { fill: #800070; stroke: none; }
.fn { fill: #101070; stroke: none; }
.grn { fill: #2ccb4c; }
.pt { fill: #22d83c; stroke: #0b6b1c; }
.sf { fill: #54d873; stroke: #123d50; }
.sf.pale { fill: #b5e2d8; stroke: #14355c; }
.dash { stroke-dasharray: 2 1; }

.app {
  display: flex;
  flex-direction: column;
  height: 100vh;
  overflow: hidden;
}

.titlebar {
  height: 21px;
  padding-top: 2px;
  background: linear-gradient(#94b0d0, #b9cfe8);
  color: #1c2836;
}

.menubar {
  display: flex;
  height: 27px;
  border-top: 1px solid #fafafa;
  border-bottom: 1px solid #999;
}
.menubar button { padding: 0 8px; white-space: nowrap; }
.menubar .cut { margin-left: -14px; }

/* toolbars */
.toolbar {
  display: flex;
  height: 26px;
}
.group {
  display: flex;
  flex: none;
  align-items: center;
  padding-right: 1px;
  border-right: 1px solid #999;
  border-bottom: 1px solid #999;
  border-top: 1px solid #fff;
}
.group::before {
  content: "";
  width: 3px;
  height: 18px;
  margin: 0 2px 0 4px;
  border-right: 1px solid #aaa;
  border-left: 1px solid #fff;
}
.group.first::before, .group.stub::before { display: none; }
.group.first { padding-left: 2px; }
.group.stub { width: 12px; margin-right: 3px; }
.group.stub .drop { margin-left: -3px; }
.group button {
  display: grid;
  place-items: center;
  width: 22px;
  height: 22px;
}
.group svg { width: 16px; height: 16px; }
.group .off svg { filter: drop-shadow(1px 1px 0 #fff); }
.group .on {
  border: 1px solid #aaa;
  border-right-color: #fff;
  border-bottom-color: #fff;
  background: #f6f6f6;
}
.group .drop { width: 11px; }
.drop::after {
  content: "";
  border: 3px solid transparent;
  border-top-color: #000;
  border-bottom: 0;
}
.drop.off::after { border-top-color: #888; }
.sep {
  width: 1px;
  height: 21px;
  margin: 0 2px;
  background: #999;
}

/* side panels */
.workspace {
  display: flex;
  flex: 1;
  min-height: 0;
  margin-top: 1px;
}
.sidebar {
  display: flex;
  flex-direction: column;
  width: 91px;
  padding-right: 5px;
}
.pane-head {
  display: flex;
  flex: none;
  align-items: center;
  justify-content: flex-end;
  gap: 7px;
  height: 21px;
  padding-right: 4px;
  border: 1px solid #999;
  border-left: 0;
  border-radius: 0 2px 2px 0;
}
.pane-head svg { display: block; width: 9px; height: 9px; }
.options { height: 192px; padding-top: 36px; }
.cells {
  display: grid;
  grid-template-rows: 43px 43px;
  width: 26px;
  border: 1px solid #888;
  border-left: 0;
  background: #e5e5e5;
}
.cells div + div { border-top: 1px solid #888; }
.exit { display: block; margin: 9px 0 0 4px; }
.exit svg { display: block; width: 16px; height: 16px; }
.tree {
  flex: 1;
  margin-top: 3px;
  padding-right: 2px;
  border-right: 2px solid #777;
  border-bottom: 2px solid #777;
  border-top: 1px solid #fff;
  background: #fdfdfd;
}
.tree-head {
  height: 21px;
  border-right: 1px solid #999;
  border-bottom: 1px solid #999;
  background: #eee;
}
.tree ul { margin: 0; padding: 0; list-style: none; }
.tree li { height: 21px; line-height: 21px; text-indent: -3px; }
.tree .wide { text-indent: 0; }
.tree .selected { background: #b2b2b2; outline: 1px dotted #333; outline-offset: -1px; }
.tabs { height: 22px; }
.tabs button {
  height: 21px;
  margin-left: -10px;
  padding: 1px 5px 0 0;
  border-right: 1px solid #666;
  border-bottom: 1px solid #666;
  border-radius: 0 0 3px 0;
}

/* drawing area */
.viewport {
  position: relative;
  flex: 1;
  min-width: 0;
  border-top: 2px solid #777;
  border-left: 2px solid #777;
  background: #e2e2e2;
}
.scene { display: block; width: 100%; height: 100%; }
.edges path {
  stroke: #160f0c;
  stroke-linejoin: round;
  vector-effect: non-scaling-stroke;
  shape-rendering: crispEdges;
}
.top { fill: #fcaa75; }
.front { fill: #ca885c; }
.left { fill: #b57b53; }
.edges .picked { fill: #007d2f; stroke: #24603a; }
.edges .marching { fill: none; stroke: #a89a80; stroke-dasharray: 7 4; }
.ucs { stroke: #1d10c8; }
.ucs text { fill: #2714c0; stroke: none; font: 9px "DejaVu Sans", sans-serif; }
.faint { stroke: #7d8a83; }
.faint text { fill: #7d8a83; }
.handles { stroke: #0008b8; }
.handles circle { fill: #0000f2; stroke: none; }
.cursor-back { stroke: #fff; stroke-width: 3; }
.cursor { stroke: #000; }
.triad { stroke: none; }
.triad circle { fill: #f5ee3c; stroke: #a59a25; }
.triad text { font: 13px "DejaVu Sans", sans-serif; }

.bounding {
  position: absolute;
  top: 39px;
  left: 39px;
  height: 24px;
  padding: 0 19px 0 8px;
  border: 1px solid #000;
  border-radius: 0;
  appearance: none;
  background:
    linear-gradient(#000, #000) right 8px top 9px / 5px 1px no-repeat,
    linear-gradient(#000, #000) right 9px top 10px / 3px 1px no-repeat,
    linear-gradient(#000, #000) right 10px top 11px / 1px 1px no-repeat,
    #f0f0f0;
  color: #000;
  font: inherit;
}

/* status bar */
.statusbar {
  display: flex;
  gap: 2px;
  height: 22px;
  padding-top: 3px;
  border-top: 1px solid #fff;
}
.message { flex: 1; margin-left: -10px; padding-top: 2px; }
.cell {
  width: 102px;
  padding: 1px 2px;
  border-top: 1px solid #999;
  border-left: 1px solid #999;
  border-right: 1px solid #fff;
}
.w1 { width: 182px; }
.w2 { width: 157px; }
```
